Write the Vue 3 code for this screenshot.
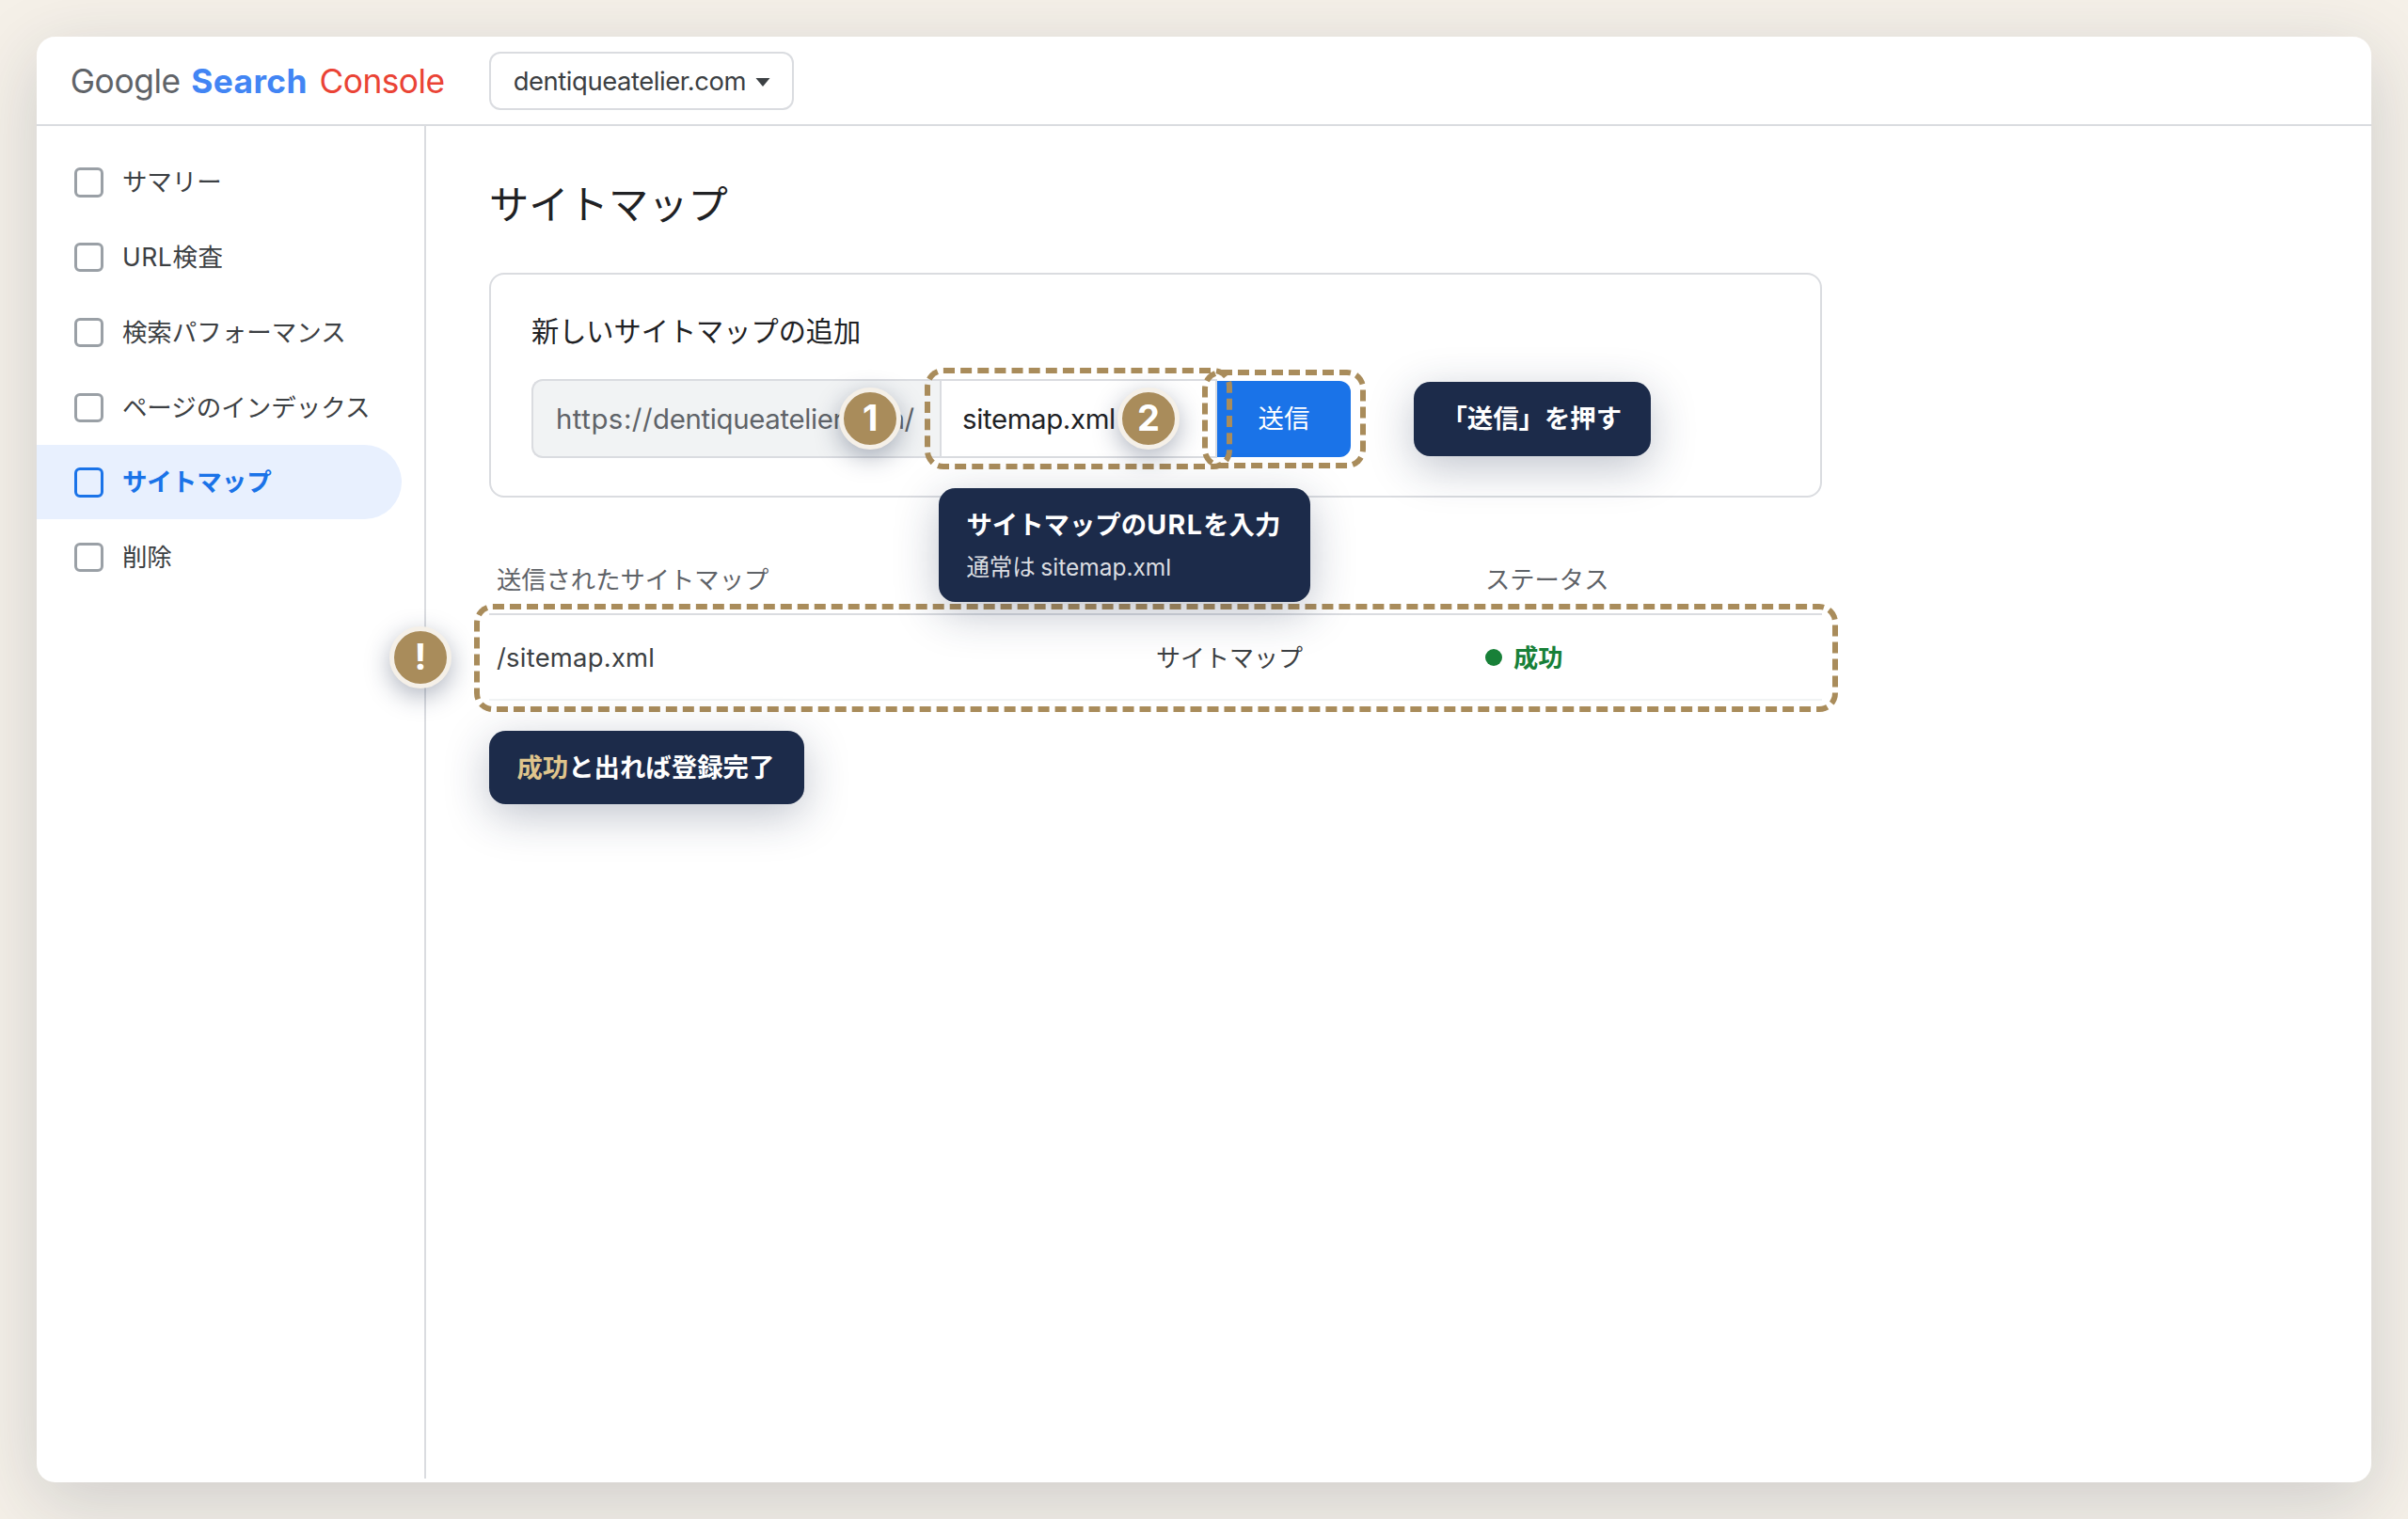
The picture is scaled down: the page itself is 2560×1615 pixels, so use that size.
<template>
  <div class="page">
    <div class="window">
      <header class="topbar">
        <div class="logo">Google <b>Search</b> <span>Console</span></div>
        <div class="property">
          <span>dentiqueatelier.com</span>
          <svg class="caret" viewBox="0 0 16 9"><path d="M0.5 0H15.5L8 9Z" fill="#3c4043" /></svg>
        </div>
      </header>

      <div class="body">
        <nav class="sidebar">
          <div
            v-for="item in menu"
            :key="item"
            class="nav-item"
            :class="{ active: item === current }"
          >
            <span class="box"></span>
            <span class="label">{{ item }}</span>
          </div>
        </nav>

        <main class="main">
          <h1>サイトマップ</h1>

          <section class="panel">
            <h2>新しいサイトマップの追加</h2>
            <div class="form-row">
              <div class="prefix"><span class="scheme">https://</span>dentiqueatelier.com/</div>
              <div class="field">
                sitemap.xml
                <div class="ring ring-field"></div>
                <div class="badge badge-1">1</div>
                <div class="tip tip-field">
                  <div>サイトマップの<span class="url">URL</span>を入力</div>
                  <div class="tip-sub">通常は sitemap.xml</div>
                </div>
              </div>
              <div class="send">
                送信
                <div class="ring ring-send"></div>
                <div class="badge badge-2">2</div>
                <div class="tip tip-send">「送信」を押す</div>
              </div>
            </div>
          </section>

          <section class="table">
            <div class="row head">
              <span>送信されたサイトマップ</span>
              <span></span>
              <span>ステータス</span>
            </div>
            <div v-for="row in rows" :key="row.path" class="row entry">
              <span class="path">{{ row.path }}</span>
              <span class="type">{{ row.type }}</span>
              <span class="status"><i class="dot"></i><span>{{ row.status }}</span></span>
              <div class="ring ring-row"></div>
              <div class="badge badge-3">!</div>
              <div class="tip tip-row"><em>成功</em>と出れば登録完了</div>
            </div>
          </section>
        </main>
      </div>
    </div>
  </div>
</template>

<script setup>
import { ref } from 'vue'

const menu = [
  'サマリー',
  'URL検査',
  '検索パフォーマンス',
  'ページのインデックス',
  'サイトマップ',
  '削除'
]
const current = ref('サイトマップ')

const rows = ref([
  { path: '/sitemap.xml', type: 'サイトマップ', status: '成功' }
])
</script>

<style>
body {
  margin: 0;
  background: #f5f0e8;
}
</style>

<style scoped>
.page {
  height: 1615px;
  padding: 39.2px;
  box-sizing: border-box;
  overflow: hidden;
  background: #f5f0e8;
  font-family: Inter, "Noto Sans CJK JP", sans-serif;
  color: #202124;
}

.window {
  height: 100%;
  display: flex;
  flex-direction: column;
  background: #fff;
  border-radius: 19.6px;
  box-shadow: 0 20px 78px rgba(28, 42, 74, 0.18);
}

/* 上部バー */
.topbar {
  height: 94.8px;
  box-sizing: border-box;
  display: flex;
  align-items: center;
  gap: 47px;
  padding-left: 35.5px;
  border-bottom: 2px solid #dadce0;
}

.logo {
  width: 398px;
  padding-top: 1px;
  font-size: 35.3px;
  letter-spacing: -0.4px;
  color: #5f6368;
  white-space: nowrap;
}

.logo b {
  margin-left: 2px;
  letter-spacing: 0.4px;
  color: #4285f4;
}

.logo span {
  margin-left: 3px;
  letter-spacing: -0.5px;
  color: #ea4335;
}

.property {
  width: 324px;
  height: 62px;
  box-sizing: border-box;
  display: flex;
  align-items: center;
  gap: 10px;
  padding: 0 24px;
  border: 2px solid #dadce0;
  border-radius: 12px;
  font-size: 27.4px;
  letter-spacing: -0.43px;
  color: #3c4043;
}

.caret {
  flex: none;
  width: 16px;
  height: 9px;
  margin-top: 4px;
}

.body {
  flex: 1;
  display: flex;
  padding-bottom: 4px;
}

/* サイドバー */
.sidebar {
  width: 413.8px;
  box-sizing: border-box;
  padding: 19.6px 23.5px 0 0;
  border-right: 2px solid #dadce0;
}

.nav-item {
  height: 79.75px;
  display: flex;
  align-items: center;
  gap: 19.5px;
  padding-left: 39.8px;
  font-size: 26.5px;
  color: #3c4043;
}

.nav-item:nth-child(2) {
  letter-spacing: 0.6px;
}

.nav-item.active {
  background: #e8f0fe;
  border-radius: 0 40px 40px 0;
  color: #1a73e8;
  font-weight: 700;
}

.label {
  padding-bottom: 3px;
}

.box {
  width: 31.4px;
  height: 31.4px;
  box-sizing: border-box;
  margin-top: 1px;
  border: 3px solid #9aa0a6;
  border-radius: 6px;
}

.active .box {
  border-color: #1a73e8;
}

/* メイン */
.main {
  flex: 1;
  padding: 51px 67px 0;
}

h1,
h2 {
  margin: 0;
  font-weight: 400;
}

h1 {
  height: 62px;
  line-height: 65px;
  font-size: 42.3px;
}

.panel {
  width: 1417px;
  height: 239px;
  box-sizing: border-box;
  margin-top: 43px;
  padding: 40px 43px 0;
  border: 2px solid #dadce0;
  border-radius: 16px;
}

h2 {
  height: 44px;
  line-height: 41px;
  font-size: 29.2px;
}

.form-row {
  display: flex;
  align-items: center;
  margin-top: 27px;
}

.prefix,
.field {
  height: 84px;
  box-sizing: border-box;
  display: flex;
  align-items: center;
  padding-top: 2px;
  border: 2px solid #dadce0;
  font-size: 29.4px;
  letter-spacing: -0.35px;
}

.prefix {
  width: 434px;
  padding-left: 24px;
  background: #f1f3f4;
  border-right: 0;
  border-radius: 12px 0 0 12px;
  color: #5f6368;
}

.scheme {
  letter-spacing: 0.5px;
}

.field {
  position: relative;
  width: 295px;
  padding-left: 22px;
}

.send {
  position: relative;
  width: 142px;
  height: 81px;
  box-sizing: border-box;
  display: flex;
  align-items: center;
  justify-content: center;
  margin-top: 1px;
  padding-bottom: 4px;
  background: #1a73e8;
  border-radius: 0 12px 12px 0;
  color: #fff;
  font-size: 27.4px;
}

/* 注釈 */
.ring {
  position: absolute;
  z-index: 1;
  box-sizing: border-box;
  border: 6px dashed #a98c5b;
  border-radius: 20px;
}

.ring-field {
  inset: -14px -18px;
}

.ring-send {
  inset: -12px -16px;
}

.ring-row {
  inset: -12px -17px -14px -16px;
}

.badge {
  position: absolute;
  z-index: 1;
  width: 66px;
  height: 66px;
  box-sizing: border-box;
  border: 5.9px solid #f5f0e8;
  border-radius: 50%;
  background: #a98c5b;
  box-shadow: 0 8px 27px rgba(28, 42, 74, 0.35);
  color: #fff;
  font-size: 38px;
  font-weight: 700;
  line-height: 54px;
  text-align: center;
}

.badge-1 {
  left: -109px;
  top: 7.5px;
}

.badge-2 {
  left: -106px;
  top: 7.5px;
}

.badge-3 {
  left: -106px;
  top: 12.5px;
}

.tip {
  position: absolute;
  z-index: 2;
  box-sizing: border-box;
  padding: 0 29.4px;
  background: #1c2b4a;
  border-radius: 17.6px;
  box-shadow: 0 12px 47px rgba(28, 42, 74, 0.28);
  color: #fff;
  font-size: 27.4px;
  font-weight: 700;
  letter-spacing: 0;
  line-height: 78px;
  white-space: nowrap;
}

.tip-field {
  left: -3px;
  top: 114px;
  width: 395px;
  height: 121px;
  padding-top: 17px;
  line-height: 43px;
}

.url {
  font-size: 28.6px;
  letter-spacing: 1.4px;
}

.tip-sub {
  margin-top: 2px;
  font-size: 24.5px;
  font-weight: 400;
  word-spacing: -1.5px;
  color: rgba(255, 255, 255, 0.85);
}

.tip-send {
  left: 209px;
  top: 1px;
  width: 252px;
  height: 79px;
}

.tip-row {
  left: 0;
  top: 123.5px;
  width: 335px;
  height: 78px;
}

.tip em {
  font-style: normal;
  color: #dfc48c;
}

/* 一覧 */
.table {
  width: 1417px;
  margin-top: 48px;
}

.row {
  display: grid;
  grid-template-columns: 701px 350px 1fr;
  align-items: center;
  padding-left: 8px;
  font-size: 26.3px;
}

.head {
  height: 77px;
  box-sizing: border-box;
  border-bottom: 2px solid #dadce0;
  color: #5f6368;
}

.entry {
  position: relative;
  height: 91.5px;
  box-sizing: border-box;
  border-bottom: 2px solid #f1f3f4;
  color: #3c4043;
}

.path {
  font-size: 27.4px;
  letter-spacing: 0.25px;
}

.type {
  padding-bottom: 2px;
  font-size: 26px;
}

.status {
  display: flex;
  align-items: center;
  gap: 12px;
  color: #188038;
  font-weight: 700;
}

.status span {
  padding-bottom: 2px;
}

.dot {
  width: 18px;
  height: 18px;
  border-radius: 50%;
  background: #188038;
}
</style>
